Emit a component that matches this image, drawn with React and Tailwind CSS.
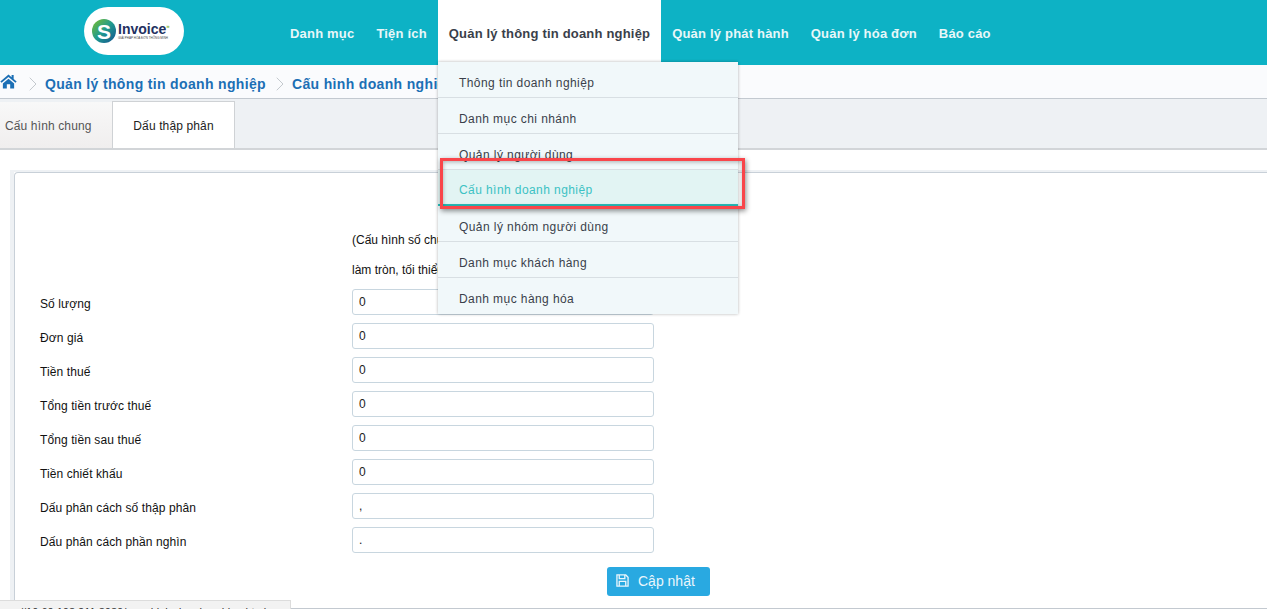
import React from 'react';
import { ChevronRight } from 'lucide-react';

const navItems = ['Danh mục', 'Tiện ích', 'Quản lý thông tin doanh nghiệp', 'Quản lý phát hành', 'Quản lý hóa đơn', 'Báo cáo'];
const menuItems = ['Thông tin doanh nghiệp', 'Danh mục chi nhánh', 'Quản lý người dùng', 'Cấu hình doanh nghiệp', 'Quản lý nhóm người dùng', 'Danh mục khách hàng', 'Danh mục hàng hóa'];
const fields = [
  ['Số lượng', '0'],
  ['Đơn giá', '0'],
  ['Tiền thuế', '0'],
  ['Tổng tiền trước thuế', '0'],
  ['Tổng tiền sau thuế', '0'],
  ['Tiền chiết khấu', '0'],
  ['Dấu phân cách số thập phân', ','],
  ['Dấu phân cách phần nghìn', '.'],
];

function Logo() {
  return (
    <div className="ml-[84px] mt-[7px] flex h-[48px] w-[100px] items-center rounded-[24px] bg-white pl-[8px]">
      <div className="flex h-[24px] w-[24px] shrink-0 items-center justify-center rounded-full bg-[linear-gradient(135deg,#7cbf2a_0%,#1f9a8f_50%,#14508f_100%)] text-[21px] font-bold leading-none text-white">S</div>
      <div className="ml-[2px] flex flex-col">
        <div className="whitespace-nowrap text-[14px] font-bold leading-[14px] text-[#23305f]">Invoice<span className="align-super text-[6px] leading-none text-[#7ab52d]">»</span></div>
        <div className="whitespace-nowrap text-[3px] leading-[4px] text-[#444]">GIẢI PHÁP HÓA ĐƠN THÔNG MINH</div>
      </div>
    </div>
  );
}

export default function App() {
  return (
    <div className="relative h-[609px] w-[1267px] overflow-hidden bg-white font-['Liberation_Sans',Arial,sans-serif] text-[12px] text-black">
      {/* top bar */}
      <header className="flex h-[65px] bg-[#0db2c5]">
        <div className="w-[279px] shrink-0"><Logo /></div>
        <nav className="flex">
          {navItems.map((item, i) => (
            <div
              key={item}
              className={`flex h-[65px] items-center whitespace-nowrap px-[11px] pt-[2px] text-[13px] font-bold tracking-[0.19px] ${i === 2 ? 'bg-white text-[#3a3f4a]' : 'text-[#e8f7f9]'}`}
            >
              {item}
            </div>
          ))}
        </nav>
      </header>

      {/* breadcrumb */}
      <div className="flex h-[34px] items-center border-b border-[#c3c9d0] bg-[#fafbfd] pt-[5px] text-[14px] font-bold tracking-[0.34px] text-[#1c6fb5]">
        <svg viewBox="0 0 18 16" className="mb-[6px] h-[15px] w-[17px] fill-[#1c6fb5]">
          <path d="M9 0.5 L0.3 8 L1.6 9.4 L9 3.2 L16.4 9.4 L17.7 8 L14.5 5.3 V1 H12.3 V3.4 Z" />
          <path d="M3 10 L9 5 L15 10 V15.5 H10.8 V11 H7.2 V15.5 H3 Z" />
        </svg>
        <ChevronRight size={24} strokeWidth={1} className="ml-[4px] text-[#c4c9ce]" />
        <span>Quản lý thông tin doanh nghiệp</span>
        <ChevronRight size={24} strokeWidth={1} className="ml-[2px] text-[#c4c9ce]" />
        <span>Cấu hình doanh nghiệp</span>
      </div>

      {/* tabs */}
      <div className="flex h-[51px] items-end border-b-2 border-[#d2d5d8] bg-[#eef1f4] tracking-[0.13px]">
        <div className="flex h-[46px] w-[112px] items-center bg-[linear-gradient(#f8f8f8,#f0eeee)] pl-[5px] pt-[2px] text-[#555]">Cấu hình chung</div>
        <div className="flex h-[47px] w-[123px] items-center justify-center border-x border-t border-[#cfd2d5] bg-white pt-[2px] text-[#222]">Dấu thập phân</div>
      </div>

      {/* form panel */}
      <div className="mt-[20px] ml-[10px] h-[480px] border-l-[4px] border-t-[2px] border-[#eef1f4]">
        <div className="h-full rounded-tl-[4px] border-l border-t border-[#c8d0d8] pl-[25px] pt-[58px]">
          <div className="ml-[312px] leading-[18px] text-[#111]">
            <div className="h-[28px]">(Cấu hình số chữ số thập phân sau dấu phẩy</div>
            <div className="h-[28px] pt-[2px]">làm tròn, tối thiểu là 0)</div>
          </div>
          <div className="mt-[2px] flex flex-col gap-[8px]">
            {fields.map(([label, value]) => (
              <div key={label} className="flex h-[26px] items-center">
                <label className="w-[312px] shrink-0 pt-[4px] tracking-[0.1px] text-[#111]">{label}</label>
                <div className="flex h-[26px] w-[302px] items-center rounded-[3px] border border-[#c8d6df] pl-[6px] text-[#222]">{value}</div>
              </div>
            ))}
          </div>
          <div className="ml-[567px] mt-[14px]">
            <button className="flex h-[29px] w-[103px] items-center rounded-[3px] bg-[#29a9e1] pl-[9px] text-[14px] text-[#eaf6fc]">
              <svg viewBox="0 0 14 14" fill="none" stroke="currentColor" strokeWidth="1.4" className="mb-[3px] h-[13px] w-[13px]">
                <path d="M1 1 H10.5 L13 3.5 V13 H1 Z" />
                <path d="M3.5 1 V5 H9.5 V1" />
                <path d="M3.5 13 V8 H10.5 V13" />
              </svg>
              <span className="ml-[9px]">Cập nhật</span>
            </button>
          </div>
        </div>
      </div>

      {/* open dropdown */}
      <div className="absolute left-[438px] top-[62px] w-[300px] bg-[#f1f8fa] shadow-[0_0_3px_rgba(0,0,0,0.3)]">
        {menuItems.map((item, i) => (
          <div
            key={item}
            className={`flex h-[36px] items-center pl-[21px] text-[12px] tracking-[0.42px] ${i === 3 ? 'border-b-2 border-[#27bdb9] bg-[#e2f4f3] text-[#3cc2c4]' : 'border-b border-[#d8dfe3] text-[#3a3f4a]'} ${i === 6 ? 'border-b-0 pt-[5px]' : 'pt-[6px]'}`}
          >
            {item}
          </div>
        ))}
      </div>

      {/* annotation */}
      <div className="absolute left-[440px] top-[158px] h-[51px] w-[305px] border-[3px] border-[#f9454a] shadow-[1px_2px_5px_rgba(0,0,0,0.45),inset_0_1px_4px_rgba(0,0,0,0.3)]" />

      <div className="absolute bottom-0 left-0 right-0 h-[1px] bg-[#c3c9d0]" />

      {/* status bar */}
      <div className="absolute bottom-0 left-0 h-[9px] w-[291px] overflow-hidden whitespace-nowrap border-r border-t border-[#dcdcdc] bg-[#f2f2f2] pl-[20px] pt-[5px] text-[11px] leading-[13px] text-[#333]">//10.60.108.211:8080/  cau-hinh-doanh-nghiep.html</div>
    </div>
  );
}
